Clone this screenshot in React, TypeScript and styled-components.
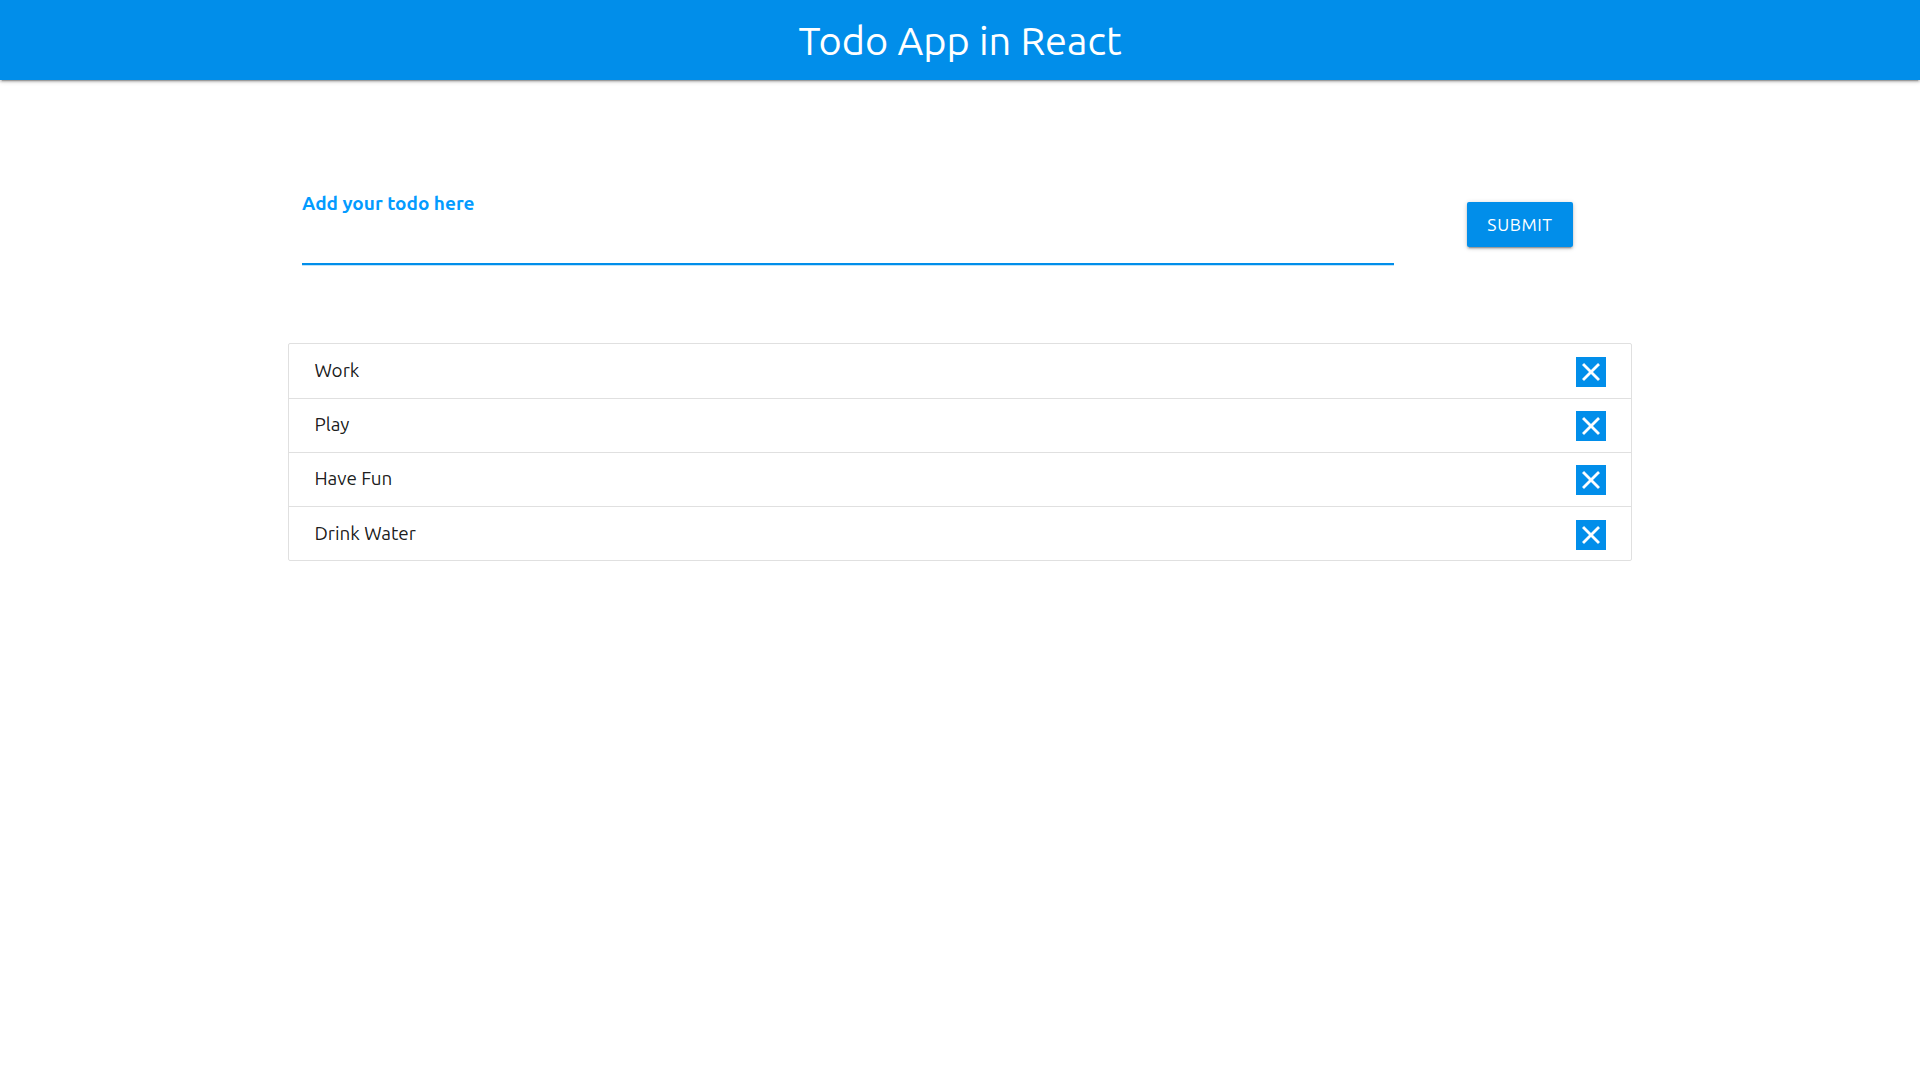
import React, { useState } from "react";
import styled, { createGlobalStyle } from "styled-components";

const blue = "#018eea";

const GlobalStyle = createGlobalStyle`
  *, *::before, *::after { box-sizing: border-box; }
  body {
    margin: 0;
    background: #fff;
    color: rgba(0, 0, 0, 0.9);
    font-family: "Ubuntu", "Noto Sans", sans-serif;
  }
`;

const Nav = styled.nav`
  display: flex;
  justify-content: center;
  height: 80px;
  background: ${blue};
  box-shadow: 0 2px 2px 0 rgba(0, 0, 0, 0.14), 0 3px 1px -2px rgba(0, 0, 0, 0.2),
    0 1px 5px 0 rgba(0, 0, 0, 0.2);
`;

const Title = styled.h1`
  margin: 0;
  color: #fff;
  font-size: 39.75px;
  font-weight: 400;
  line-height: 82px;
  white-space: nowrap;
`;

const Container = styled.main`
  width: 70%;
  margin: 0 auto;
`;

const Form = styled.form`
  display: flex;
  align-items: flex-start;
  padding: 109px 0 0 14px;
`;

const Field = styled.div`
  display: flex;
  flex-direction: column;
  width: 1092px;
`;

const Label = styled.label`
  color: #039bff;
  font-size: 19px;
  font-weight: 700;
  line-height: 28px;
`;

const Input = styled.input`
  height: 47px;
  padding: 0;
  border: 0;
  border-bottom: 1px solid ${blue};
  box-shadow: 0 1px 0 0 ${blue}, 0 2px 0 0 rgba(1, 142, 234, 0.25);
  background: transparent;
  color: inherit;
  font: inherit;
  font-size: 19px;
  outline: none;
`;

const Submit = styled.button`
  width: 106px;
  height: 45px;
  margin: 13px 0 0 73px;
  padding: 0;
  border: 0;
  border-radius: 2px;
  background: ${blue};
  box-shadow: 0 2px 2px 0 rgba(0, 0, 0, 0.14), 0 3px 1px -2px rgba(0, 0, 0, 0.2),
    0 1px 5px 0 rgba(0, 0, 0, 0.2);
  color: #fff;
  font-family: inherit;
  font-size: 17.5px;
  letter-spacing: 0.6px;
  text-transform: uppercase;
  cursor: pointer;
`;

const List = styled.ul`
  margin: 79.35px 0 0;
  padding: 0;
  border: 1px solid #e0e0e0;
  border-radius: 2px;
  list-style: none;
`;

const Item = styled.li`
  display: flex;
  align-items: flex-start;
  justify-content: space-between;
  height: 54.25px;
  padding: 12.5px 25px 0 25.4px;
  border-bottom: 1px solid #e0e0e0;

  &:last-child {
    border-bottom: 0;
    height: 53.25px;
  }
`;

const ItemText = styled.span`
  font-size: 18.9px;
  line-height: 27px;
`;

const Remove = styled.button`
  display: flex;
  align-items: center;
  justify-content: center;
  width: 30px;
  height: 30px;
  padding: 0;
  border: 0;
  background: ${blue};
  color: #fff;
  cursor: pointer;
`;

const CloseIcon = () => (
  <svg
    width="30"
    height="30"
    viewBox="0 0 24 24"
    fill="currentColor"
    stroke="currentColor"
    strokeWidth="0.3"
    aria-hidden="true"
  >
    <path d="M19 6.41L17.59 5 12 10.59 6.41 5 5 6.41 10.59 12 5 17.59 6.41 19 12 13.41 17.59 19 19 17.59 13.41 12z" />
  </svg>
);

export default function App() {
  const [todos, setTodos] = useState(["Work", "Play", "Have Fun", "Drink Water"]);
  const [draft, setDraft] = useState("");

  const addTodo = (event: React.FormEvent) => {
    event.preventDefault();
    if (!draft.trim()) return;
    setTodos([...todos, draft.trim()]);
    setDraft("");
  };

  return (
    <>
      <GlobalStyle />
      <Nav>
        <Title>Todo App in React</Title>
      </Nav>
      <Container>
        <Form onSubmit={addTodo}>
          <Field>
            <Label htmlFor="todo">Add your todo here</Label>
            <Input id="todo" value={draft} onChange={(e) => setDraft(e.target.value)} />
          </Field>
          <Submit type="submit">Submit</Submit>
        </Form>
        <List>
          {todos.map((todo, index) => (
            <Item key={index}>
              <ItemText>{todo}</ItemText>
              <Remove
                type="button"
                aria-label="Remove"
                onClick={() => setTodos(todos.filter((_, i) => i !== index))}
              >
                <CloseIcon />
              </Remove>
            </Item>
          ))}
        </List>
      </Container>
    </>
  );
}
